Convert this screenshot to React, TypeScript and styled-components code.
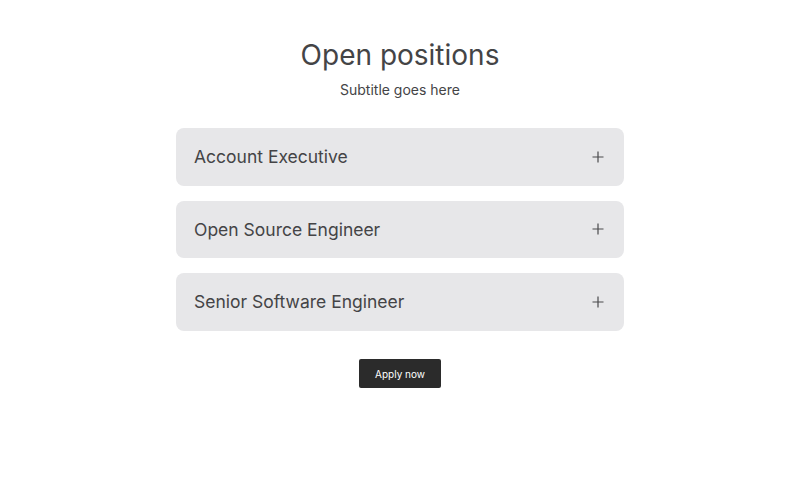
import styled, { createGlobalStyle } from 'styled-components'

const GlobalStyle = createGlobalStyle`
  html, body {
    margin: 0;
    padding: 0;
    background: #ffffff;
    font-family: Inter, 'Noto Sans', sans-serif;
    color: #444446;
  }
`

const Page = styled.main`
  display: flex;
  flex-direction: column;
  align-items: center;
  padding-top: 37px;
`

const Title = styled.h1`
  margin: 0;
  font-size: 28px;
  line-height: 36px;
  font-weight: 400;
  color: #444446;
`

const Subtitle = styled.p`
  margin: 7px 0 0;
  font-size: 14px;
  line-height: 20px;
  color: #444446;
`

const List = styled.div`
  display: flex;
  flex-direction: column;
  gap: 15px;
  width: 448px;
  margin-top: 28px;
`

const Item = styled.button`
  display: flex;
  align-items: center;
  justify-content: space-between;
  height: 57.5px;
  padding: 0 18px;
  border: none;
  border-radius: 8px;
  background: #e7e7e9;
  font-family: inherit;
  font-size: 17.5px;
  color: #444446;
  text-align: left;
  cursor: pointer;
`

const Plus = styled.svg`
  width: 12px;
  height: 12px;
  margin-right: 2px;
  flex-shrink: 0;
`

const ApplyButton = styled.button`
  margin-top: 28.5px;
  width: 82px;
  height: 29px;
  border: none;
  border-radius: 2px;
  background: #2b2b2b;
  color: #ffffff;
  font-family: inherit;
  font-size: 10px;
  cursor: pointer;
`

const positions = ['Account Executive', 'Open Source Engineer', 'Senior Software Engineer']

export default function App() {
  return (
    <>
      <GlobalStyle />
      <Page>
        <Title>Open positions</Title>
        <Subtitle>Subtitle goes here</Subtitle>
        <List>
          {positions.map((name) => (
            <Item key={name}>
              {name}
              <Plus viewBox="0 0 12 12" fill="none" stroke="#4a4a4c" strokeWidth="1.2">
                <path d="M6 0.5v11M0.5 6h11" />
              </Plus>
            </Item>
          ))}
        </List>
        <ApplyButton>Apply now</ApplyButton>
      </Page>
    </>
  )
}
